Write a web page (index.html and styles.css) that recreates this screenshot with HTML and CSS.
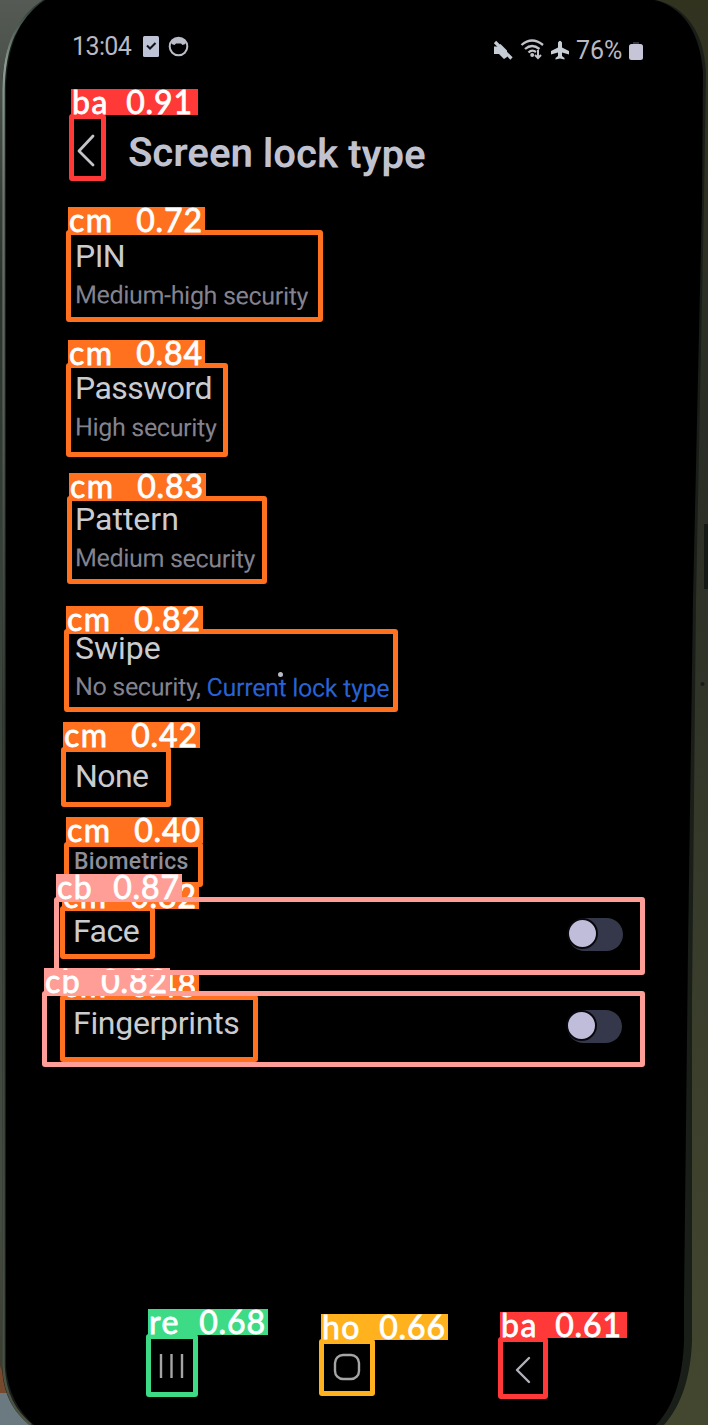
FILE: index.html
```
<!DOCTYPE html>
<html lang="en">
<head>
<meta charset="utf-8">
<title>Screen lock type</title>
<link rel="stylesheet" href="styles.css">
</head>
<body>
<div class="stage">
  <svg class="bezel" width="708" height="1425" viewBox="0 0 708 1425" aria-hidden="true">
    <defs>
      <linearGradient id="left" x1="0" y1="0" x2="0" y2="1"><stop offset="0" stop-color="#555b54"/><stop offset=".2" stop-color="#2c332e"/><stop offset=".45" stop-color="#3b433d"/><stop offset=".85" stop-color="#454b43"/><stop offset="1" stop-color="#3a382a"/></linearGradient>
      <linearGradient id="right" x1="0" y1="0" x2="0" y2="1"><stop offset="0" stop-color="#32331f"/><stop offset=".3" stop-color="#292d25"/><stop offset=".6" stop-color="#363a2a"/><stop offset="1" stop-color="#44472f"/></linearGradient>
      <linearGradient id="rail" x1="0" y1="0" x2="0" y2="1"><stop offset="0" stop-color="#26322d"/><stop offset=".045" stop-color="#8b9a92"/><stop offset=".14" stop-color="#69746b"/><stop offset=".5" stop-color="#343d35"/><stop offset="1" stop-color="#4c5345"/></linearGradient>
    </defs>
    <rect width="350" height="1425" fill="url(#left)"/>
    <rect x="350" width="358" height="1425" fill="url(#right)"/>
    <path d="M0 1366L12 1393H0Z" fill="#76492c"/>
    <path d="M0 1393H12L35 1425H0Z" fill="#6b7a80"/>
    <path d="M35 0H656C686 7 704 32 706 72L704 200L696 600L692 1000L692 1340C691 1375 682 1405 664 1425H30C12 1411 3 1392 2 1367V90C3 48 14 18 45 0Z" fill="#191e18"/>
    <path d="M45 0C16 18 4 46 3.500 90V1367C5 1394 14 1411 31 1425" fill="none" stroke="url(#rail)" stroke-width="2.500"/>
    <path d="M36 0H654C681 6 700 30 703 72L702 200L693 600L688 950L684 1300V1340C683 1375 675 1405 656 1425H34C18 1411 8 1392 6 1367V90C7 48 18 18 45 0Z" fill="#000"/>
    <path d="M704 524H708V589H704Z" fill="#151a16"/>
    <circle cx="702.500" cy="684" r="2" fill="#181c17"/>
  </svg>

  <main class="screen">
    <header class="status">
      <div class="status-left">
        <span class="time">13:04</span>
        <svg class="check-icon" width="16" height="21" viewBox="0 0 16 21"><rect width="16" height="21" rx="1.500" fill="#bec3d5"/><path d="M4 9.500L7 12.500L12.500 7" fill="none" stroke="#10121a" stroke-width="2"/></svg>
        <svg width="21" height="21" viewBox="0 0 21 21"><circle cx="10.500" cy="10.500" r="8.800" fill="none" stroke="#bbbec9" stroke-width="2"/><path d="M4 4Q10.500 0 17 4L17.500 8L14.500 9L13 7.500H8L6.500 9L3.500 8Z" fill="#bbbec9"/></svg>
      </div>
      <div class="status-right">
        <svg width="20" height="20" viewBox="0 0 20 20"><path d="M1 6.500H5L8.500 3L14 9V1V17L11 19L6 14H1Z" fill="#c5ccd5"/><path d="M5 0L20 15" stroke="#000" stroke-width="2"/><path d="M2 2L18.500 18.500" stroke="#c5ccd5" stroke-width="3.200"/></svg>
        <svg class="wifi-icon" width="26" height="22" viewBox="0 0 26 22"><path d="M1.500 7Q12 -2 23 7M5 11Q12 5 19.500 11M8.500 14.500Q12 11 16 14" fill="none" stroke="#c2c3ca" stroke-width="2.300"/><circle cx="12.200" cy="17" r="2" fill="#c2c3ca"/><path d="M18 12V20M15 17L18 20L21 17" fill="none" stroke="#c2c3ca" stroke-width="2"/></svg>
        <svg class="plane-icon" width="20" height="20" viewBox="0 0 20 20"><path d="M8 2.500Q10 -1 12 2.500V7.500L19 11V14.500L12 12.500V16L14.500 18V19.500L10 18.500L5.500 19.500V18L8 16V12.500L1 14.500V11L8 7.500Z" fill="#c7ced5"/></svg>
        <span class="battery-text">76%</span>
        <svg class="battery-icon" width="14" height="20" viewBox="0 0 14 20"><path d="M4 3V1H10V3" fill="#35353d"/><rect y="3" width="14" height="16" rx="2.500" fill="#c6c5d7"/></svg>
      </div>
    </header>

    <div class="title-row">
      <svg width="18" height="34" viewBox="0 0 18 34"><path d="M16 2L2 17L16 31" fill="none" stroke="#c4c4c8" stroke-width="2.800" stroke-linecap="round" stroke-linejoin="round"/></svg>
      <h1 class="title">Screen lock type</h1>
    </div>

    <section class="options">
      <div class="option pin"><div class="name">PIN</div><div class="detail">Medium-high security</div></div>
      <div class="option password"><div class="name">Password</div><div class="detail">High security</div></div>
      <div class="option pattern"><div class="name">Pattern</div><div class="detail">Medium security</div></div>
      <div class="option swipe"><div class="name">Swipe</div><div class="detail">No security, <span class="current">Current lock type</span></div></div>
      <div class="option none"><div class="name">None</div></div>
    </section>

    <h2 class="section-title">Biometrics</h2>
    <div class="switch-row face"><span class="name">Face</span><span class="switch"></span></div>
    <div class="switch-row finger"><span class="name">Fingerprints</span><span class="switch"></span></div>

    <nav class="nav">
      <svg width="26" height="26" viewBox="0 0 26 26"><path d="M2 1V25M12.500 1V25M23 1V25" stroke="#a4a4a6" stroke-width="2.400"/></svg>
      <svg width="28" height="28" viewBox="0 0 28 28"><rect x="2" y="2" width="24" height="24" rx="8" fill="none" stroke="#a5a5a7" stroke-width="2.400"/></svg>
      <svg width="16" height="28" viewBox="0 0 16 28"><path d="M14 2L2 14L14 26" fill="none" stroke="#b3b0bb" stroke-width="2.400" stroke-linecap="round" stroke-linejoin="round"/></svg>
    </nav>
  </main>

  <i class="touch"></i>

  <div class="box red b-back"><div class="tag"><span>ba</span> <span>0.91</span></div></div>
  <div class="box orange b-pin"><div class="tag"><span>cm</span> <span>0.72</span></div></div>
  <div class="box orange b-password"><div class="tag"><span>cm</span> <span>0.84</span></div></div>
  <div class="box orange b-pattern"><div class="tag"><span>cm</span> <span>0.83</span></div></div>
  <div class="box orange b-swipe"><div class="tag"><span>cm</span> <span>0.82</span></div></div>
  <div class="box orange b-none"><div class="tag"><span>cm</span> <span>0.42</span></div></div>
  <div class="box orange b-bio"><div class="tag"><span>cm</span> <span>0.40</span></div></div>
  <div class="box orange b-face"><div class="tag"><span>cm</span> <span>0.82</span></div></div>
  <div class="box orange b-finger"><div class="tag"><span>cm</span> <span>0.48</span></div></div>
  <div class="box pink b-finger-row"><div class="tag"><span>cb</span> <span>0.82</span></div></div>
  <div class="box pink b-face-row"><div class="tag"><span>cb</span> <span>0.87</span></div></div>
  <div class="box green b-recents"><div class="tag"><span>re</span> <span>0.68</span></div></div>
  <div class="box amber b-home"><div class="tag"><span>ho</span> <span>0.66</span></div></div>
  <div class="box red b-navback"><div class="tag"><span>ba</span> <span>0.61</span></div></div>
</div>
</body>
</html>
```

FILE: styles.css
```
* { box-sizing: border-box; }
body { margin: 0; background: #000; }
svg { display: block; flex: none; }
.stage { position: relative; width: 708px; height: 1425px; overflow: hidden; font-family: Roboto, "Liberation Sans", sans-serif; }
.bezel { position: absolute; left: 0; top: 0; }
.screen { position: relative; height: 1425px; padding: 33px 64px 0 75px; display: flex; flex-direction: column; }

.status { display: flex; justify-content: space-between; height: 36px; color: #b9b9c1; font-size: 25px; line-height: 28px; }
.status-left { display: flex; align-items: flex-start; margin-left: -3px; }
.time { width: 71px; letter-spacing: -.6px; line-height: 28px; }
.check-icon { margin-right: 9px; }
.status-left svg { margin-top: 3px; }
.status-right { display: flex; align-items: flex-start; padding-top: 3px; }
.status-right svg { margin-top: 4px; }
.status-right .wifi-icon { margin: 2px 4px 0 7px; }
.status-right .battery-icon { margin-top: 5px; margin-right: 1px; }
.battery-text { margin-left: 6px; width: 53px; line-height: 30px; letter-spacing: 0; }

.title-row { display: flex; align-items: center; height: 52px; margin: 59px 0 0 2px; gap: 33px; }
.title-row svg { margin-top: -6px; }
.title { margin: 0; font-size: 40px; line-height: 52px; font-weight: 600; color: #c0c2d0; letter-spacing: .05px; white-space: nowrap; transform: rotate(.5deg); }

.options { display: flex; flex-direction: column; margin-top: 56px; }
.option { height: 132px; }
.name { font-size: 32px; line-height: 40px; color: #cbccd0; white-space: nowrap; letter-spacing: -.55px; }
.detail { width: max-content; margin-top: 5px; font-size: 25px; line-height: 30px; color: #83838f; white-space: nowrap; letter-spacing: -.31px; transform: rotate(.4deg); }
.password { height: 131px; }
.pattern { height: 128px; }
.pattern .name, .swipe .name { letter-spacing: 0; }
.swipe { height: 129px; }
.swipe .name { line-height: 42px; }
.swipe .detail { margin-top: 4px; }
.none { height: 40px; }
.current { color: #2862d4; }

.section-title { margin: 51px 0 0 -1px; font-size: 23px; line-height: 30px; font-weight: 500; letter-spacing: .35px; color: #8e8e9b; }
.switch-row { display: flex; align-items: center; justify-content: space-between; height: 40px; margin-left: -2px; padding-right: 21px; }
.face { margin-top: 34px; }
.finger { margin-top: 52px; padding-right: 22px; }
.finger .name { letter-spacing: -.3px; }
.switch { width: 55px; height: 33px; margin-top: 6px; border-radius: 17px; background: #35384a; }
.switch::before { content: ""; display: block; width: 27px; height: 27px; margin: 0 0 0 -1px; border-radius: 50%; border: 2px solid #08080c; background: #bfbdd9; }

.nav { display: flex; align-items: flex-start; margin: 310px 0 0 84px; }
.nav svg + svg { margin-left: 148px; }
.nav svg + svg + svg { margin: 3px 0 0 154px; }

.touch { position: absolute; left: 278px; top: 672px; width: 5px; height: 5px; border-radius: 50%; background: #b9bac2; }

.box { position: absolute; border: 5px solid var(--c); border-radius: 3px; }
.tag { position: absolute; left: -3px; top: -28px; width: 137px; height: 26px; padding: 0 2px 0 1px; display: flex; justify-content: space-between; background: var(--c); color: #fff; font: 400 32px/26px Lato, sans-serif; white-space: nowrap; -webkit-text-stroke: .8px #fff; }
.tag span:first-child { letter-spacing: 1.5px; }
.tag span + span { letter-spacing: .9px; }
.red { --c: #ff3838; }
.orange { --c: #ff701f; }
.pink { --c: #ff9d97; }
.green { --c: #3ddb86; }
.amber { --c: #ffb21d; }
.red .tag, .amber .tag { width: 127px; }
.pink .tag { width: 126px; }
.green .tag { width: 120px; }
.b-back { left: 69px; top: 114px; width: 37px; height: 67px; }
.b-back .tag { top: -30px; }
.b-back .tag, .b-navback .tag { padding-right: 5px; }
.b-pin { left: 66px; top: 230px; width: 257px; height: 92px; }
.b-password { left: 66px; top: 363px; width: 162px; height: 94px; }
.b-pattern { left: 67px; top: 496px; width: 200px; height: 88px; }
.b-swipe { left: 64px; top: 629px; width: 334px; height: 83px; }
.b-none { left: 61px; top: 747px; width: 110px; height: 60px; }
.b-none .tag, .b-bio .tag { top: -30px; }
.b-bio { left: 64px; top: 842px; width: 139px; height: 45px; }
.b-face { left: 60px; top: 906px; width: 95px; height: 53px; }
.b-finger { left: 60px; top: 995px; width: 198px; height: 67px; }
.b-finger-row { left: 42px; top: 991px; width: 603px; height: 76px; }
.b-face-row { left: 54px; top: 897px; width: 591px; height: 78px; }
.b-recents { left: 146px; top: 1334px; width: 52px; height: 63px; }
.b-home { left: 319px; top: 1339px; width: 56px; height: 57px; }
.b-navback { left: 498px; top: 1337px; width: 50px; height: 62px; }
.b-recents .tag, .b-home .tag, .b-navback .tag { top: -30px; }
```
